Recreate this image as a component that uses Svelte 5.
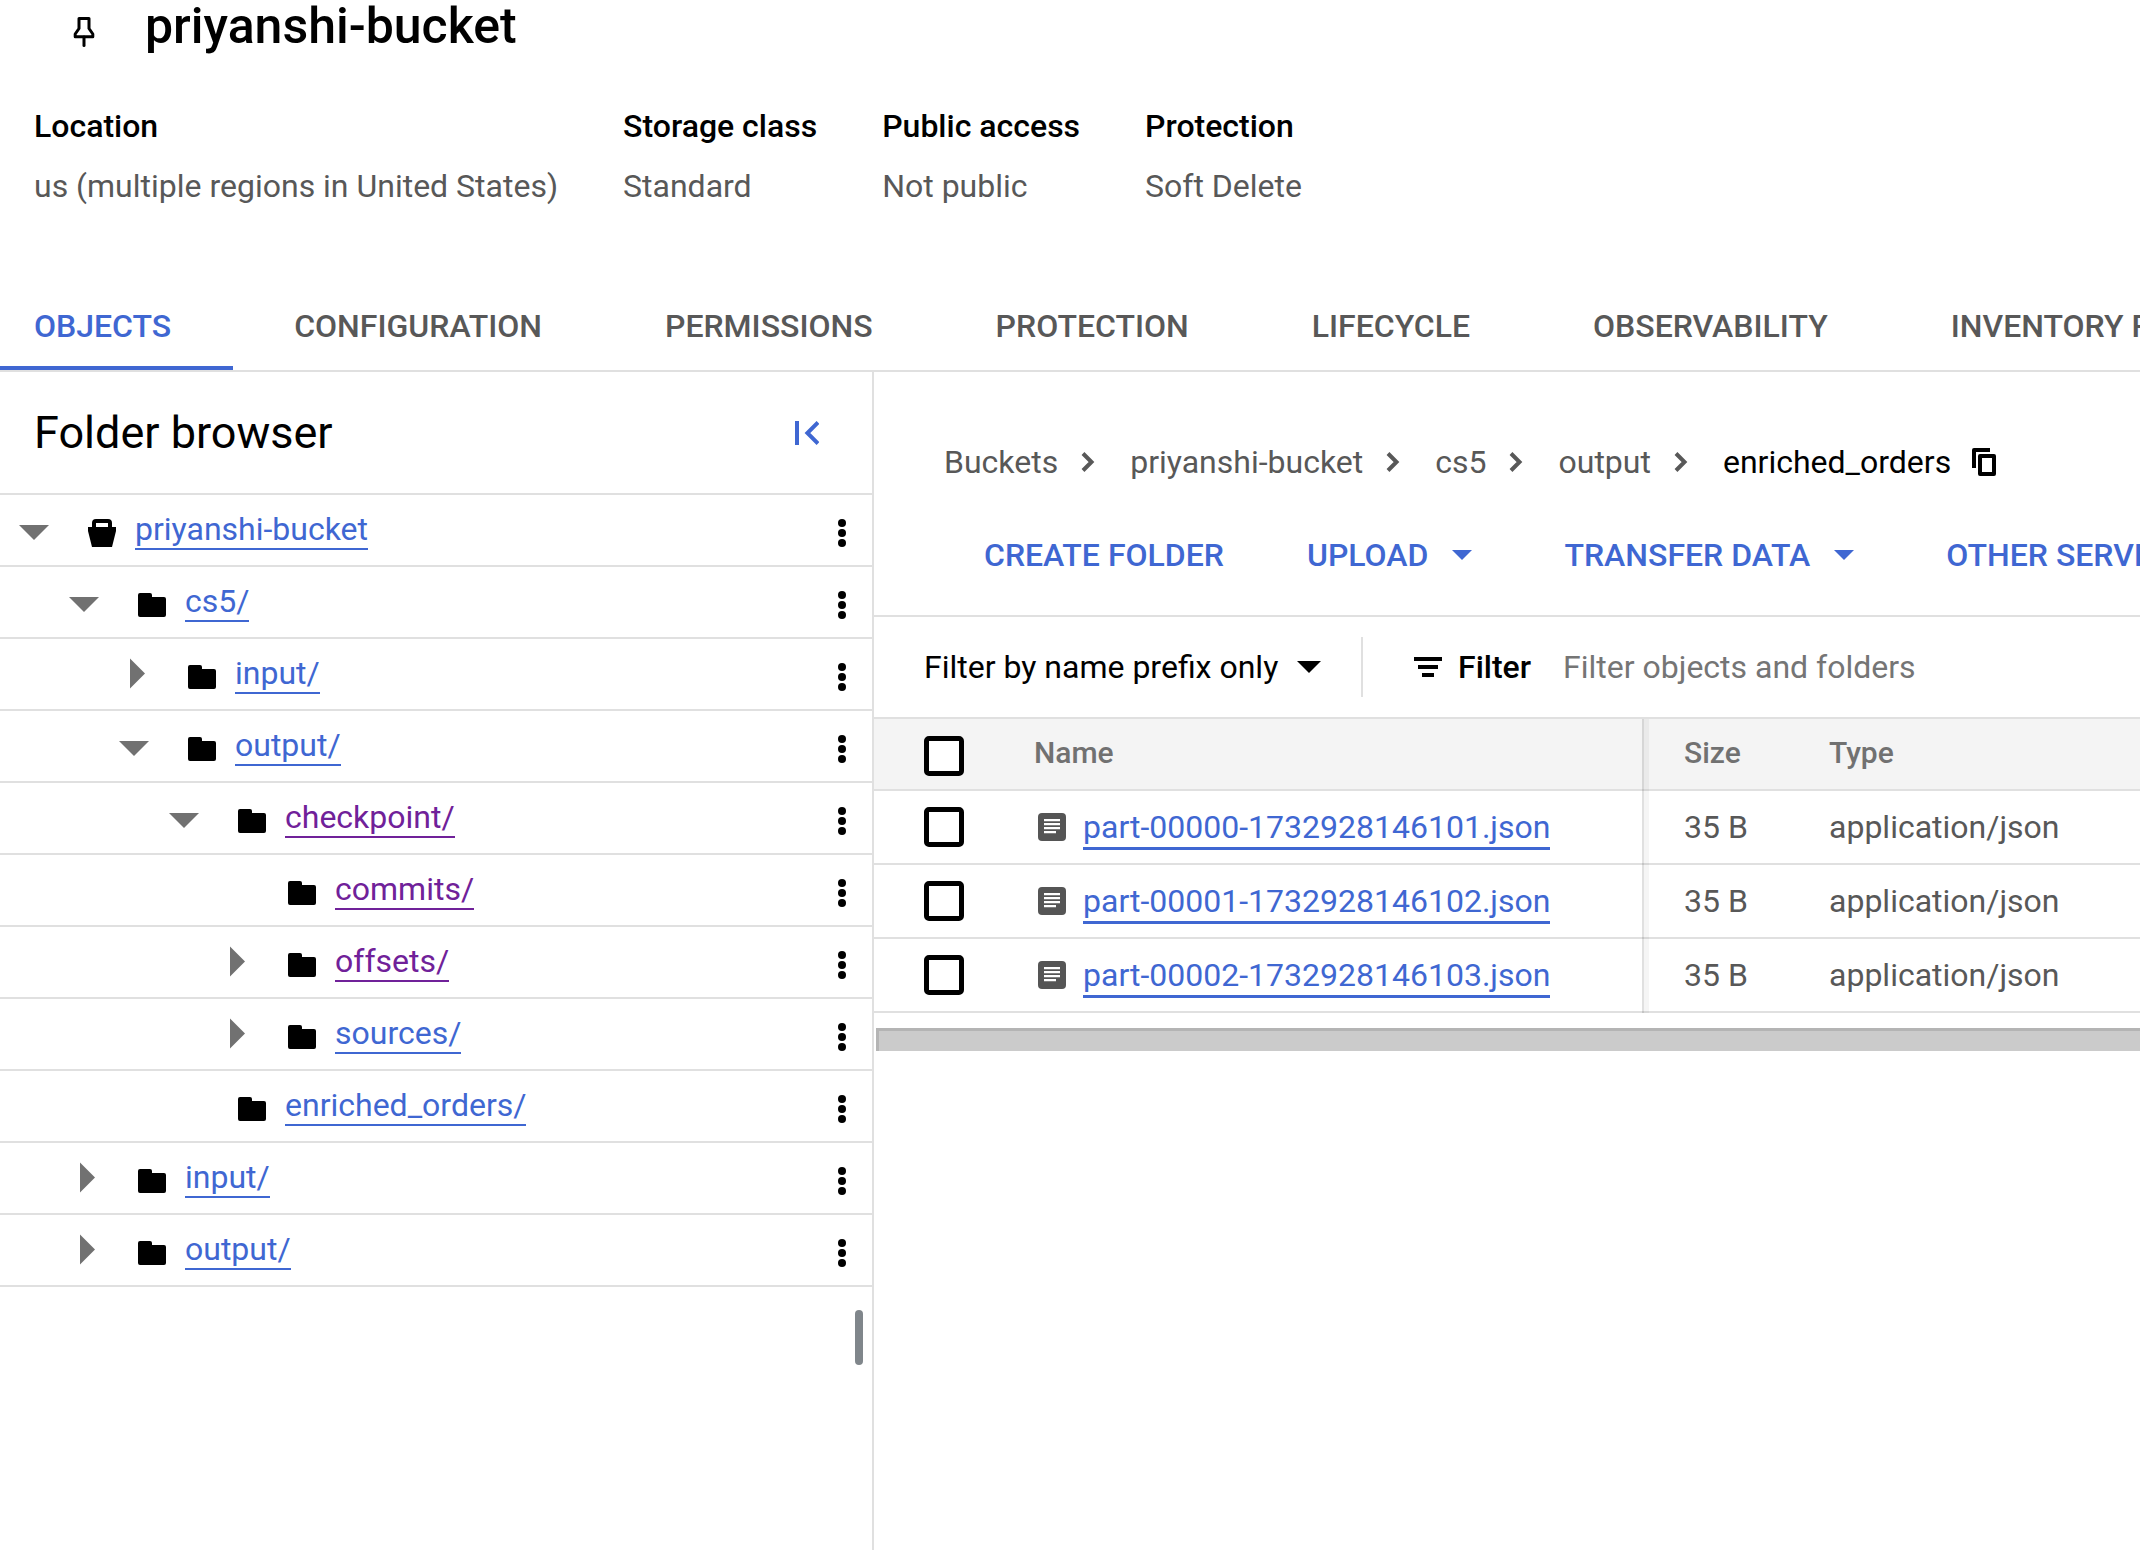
<script>
  const details = [
    { label: 'Location', value: 'us (multiple regions in United States)' },
    { label: 'Storage class', value: 'Standard' },
    { label: 'Public access', value: 'Not public' },
    { label: 'Protection', value: 'Soft Delete' }
  ];

  const tabs = [
    'OBJECTS',
    'CONFIGURATION',
    'PERMISSIONS',
    'PROTECTION',
    'LIFECYCLE',
    'OBSERVABILITY',
    'INVENTORY REPORTS'
  ];
  let activeTab = $state('OBJECTS');

  const tree = [
    { name: 'priyanshi-bucket', depth: 0, toggle: 'open', bucket: true },
    { name: 'cs5/', depth: 1, toggle: 'open' },
    { name: 'input/', depth: 2, toggle: 'closed' },
    { name: 'output/', depth: 2, toggle: 'open' },
    { name: 'checkpoint/', depth: 3, toggle: 'open', visited: true },
    { name: 'commits/', depth: 4, toggle: 'none', visited: true },
    { name: 'offsets/', depth: 4, toggle: 'closed', visited: true },
    { name: 'sources/', depth: 4, toggle: 'closed' },
    { name: 'enriched_orders/', depth: 3, toggle: 'none' },
    { name: 'input/', depth: 1, toggle: 'closed' },
    { name: 'output/', depth: 1, toggle: 'closed' }
  ];

  const crumbs = ['Buckets', 'priyanshi-bucket', 'cs5', 'output'];

  const actions = [
    { label: 'CREATE FOLDER', menu: false },
    { label: 'UPLOAD', menu: true },
    { label: 'TRANSFER DATA', menu: true },
    { label: 'OTHER SERVICES', menu: true }
  ];

  let files = $state([
    { name: 'part-00000-1732928146101.json', size: '35 B', type: 'application/json', checked: false },
    { name: 'part-00001-1732928146102.json', size: '35 B', type: 'application/json', checked: false },
    { name: 'part-00002-1732928146103.json', size: '35 B', type: 'application/json', checked: false }
  ]);

  function selectAll(event) {
    for (const file of files) file.checked = event.currentTarget.checked;
  }
</script>

<div class="page">
  <header class="title-bar">
    <button class="pin" aria-label="Pin bucket">
      <svg width="22" height="30" viewBox="0 0 22 30">
        <path d="M6 1.5H16V11.5L19.8 17V19.8H2.2V17L6 11.5Z" fill="none" stroke="#000" stroke-width="3" stroke-linejoin="round" />
        <path d="M11 20V28.5" stroke="#000" stroke-width="3" stroke-linecap="round" />
      </svg>
    </button>
    <h1>priyanshi-bucket</h1>
  </header>

  <dl class="details">
    {#each details as item}
      <div>
        <dt>{item.label}</dt>
        <dd>{item.value}</dd>
      </div>
    {/each}
  </dl>

  <div class="tabs" role="tablist">
    {#each tabs as tab}
      <button
        class="tab"
        class:active={tab === activeTab}
        role="tab"
        aria-selected={tab === activeTab}
        onclick={() => (activeTab = tab)}>{tab}</button>
    {/each}
  </div>

  <div class="body">
    <aside class="sidebar">
      <div class="side-head">
        <h2>Folder browser</h2>
        <button class="collapse" aria-label="Collapse folder browser">
          <svg width="24" height="24" viewBox="0 0 24 24">
            <path d="M0 0H4V24H0Z" fill="currentColor" />
            <path d="M23 1.4L12.4 12L23 22.6" fill="none" stroke="currentColor" stroke-width="4" />
          </svg>
        </button>
      </div>
      <ul class="tree">
        {#each tree as node}
          <li class="node">
            <span class="indent" style:width="{node.depth * 50}px"></span>
            {#if node.toggle === 'none'}
              <span class="toggle"></span>
            {:else}
              <button class="toggle" aria-label="Toggle {node.name}" aria-expanded={node.toggle === 'open'}>
                <svg width="60" height="70" viewBox="0 0 60 70">
                  {#if node.toggle === 'open'}
                    <path d="M19 30H49L34 45Z" fill="#717171" />
                  {:else}
                    <path d="M30 19.5V49.5L45 34.5Z" fill="#717171" />
                  {/if}
                </svg>
              </button>
            {/if}
            <svg class="kind" width="28" height="28" viewBox="0 0 28 28">
              {#if node.bucket}
                <path fill-rule="evenodd" d="M0 8H4V4Q4 0 8 0H20Q24 0 24 4V8H28V12L24 28H4L0 12ZM8 4V8H20V4Z" />
              {:else}
                <path d="M2 2H12Q14 2 14 4V6H26Q28 6 28 8V24Q28 26 26 26H2Q0 26 0 24V4Q0 2 2 2Z" />
              {/if}
            </svg>
            <a class="node-link" class:visited={node.visited} href="#{node.name}">{node.name}</a>
            <button class="more" aria-label="Actions for {node.name}">
              <svg width="8" height="28" viewBox="0 0 8 28">
                <circle cx="4" cy="4" r="4" />
                <circle cx="4" cy="14" r="4" />
                <circle cx="4" cy="24" r="4" />
              </svg>
            </button>
          </li>
        {/each}
      </ul>
      <div class="thumb"></div>
    </aside>

    <main class="content">
      <nav class="crumbs" aria-label="Breadcrumb">
        {#each crumbs as crumb}
          <a href="#{crumb}">{crumb}</a>
          <svg class="chevron" width="14" height="20" viewBox="0 0 14 20">
            <path d="M2 1.5L10.5 10L2 18.5" fill="none" stroke="#585858" stroke-width="4" />
          </svg>
        {/each}
        <span class="current">enriched_orders</span>
        <button class="copy" aria-label="Copy path">
          <svg width="24" height="28" viewBox="0 0 24 28">
            <path d="M2 20V2H18" fill="none" stroke="#000" stroke-width="4" stroke-linejoin="round" />
            <rect x="8" y="8" width="14" height="18" fill="none" stroke="#000" stroke-width="4" stroke-linejoin="round" />
          </svg>
        </button>
      </nav>

      <div class="actions">
        {#each actions as action}
          <button class="action" class:menu={action.menu}>
            {action.label}
            {#if action.menu}
              <svg width="20" height="10" viewBox="0 0 20 10"><path d="M0 0H20L10 10Z" fill="currentColor" /></svg>
            {/if}
          </button>
        {/each}
      </div>

      <div class="filter-bar">
        <label class="prefix">
          <select aria-label="Filter mode">
            <option>Filter by name prefix only</option>
          </select>
          <svg width="24" height="12" viewBox="0 0 24 12"><path d="M0 0H24L12 12Z" /></svg>
        </label>
        <label class="filter" for="object-filter">
          <svg width="28" height="20" viewBox="0 0 28 20">
            <path d="M0 0H28V4H0ZM4 8H24V12H4ZM8 16H20V20H8Z" />
          </svg>
          Filter
        </label>
        <input id="object-filter" class="filter-input" type="text" placeholder="Filter objects and folders" />
      </div>

      <table>
        <thead>
          <tr>
            <th class="c-check"><input type="checkbox" aria-label="Select all" onchange={selectAll} /></th>
            <th class="c-name">Name</th>
            <th class="c-size">Size</th>
            <th class="c-type">Type</th>
          </tr>
        </thead>
        <tbody>
          {#each files as file}
            <tr>
              <td class="c-check"><input type="checkbox" aria-label="Select {file.name}" bind:checked={file.checked} /></td>
              <td class="c-name">
                <div class="file">
                  <svg width="28" height="28" viewBox="0 0 28 28">
                    <rect width="28" height="28" rx="4" fill="#555" />
                    <path d="M6 6H22V8.2H6ZM6 10H22V12.2H6ZM6 14H22V16.2H6ZM6 18H18V20.2H6Z" fill="#fff" />
                  </svg>
                  <a href="#{file.name}">{file.name}</a>
                </div>
              </td>
              <td class="c-size">{file.size}</td>
              <td class="c-type">{file.type}</td>
            </tr>
          {/each}
        </tbody>
      </table>
      <div class="scroll-track"></div>
    </main>
  </div>
</div>

<style>
  :global(body) {
    margin: 0;
    background: #fff;
  }

  .page {
    --blue: #3f67d2;
    --line: #e0e0e0;
    --grey: #585858;
    display: flex;
    flex-direction: column;
    min-height: 100vh;
    overflow: hidden;
    color: #000;
    font: 400 32px/40px Roboto, sans-serif;
  }

  button,
  input,
  select {
    margin: 0;
    padding: 0;
    border: 0;
    background: none;
    color: inherit;
    font: inherit;
  }

  button {
    cursor: pointer;
  }

  svg {
    display: block;
    flex: none;
  }

  .title-bar {
    display: flex;
    align-items: flex-start;
    height: 60px;
    padding-left: 73px;
  }

  .pin {
    margin: 17px 50px 0 0;
  }

  h1 {
    margin: 0;
    font-size: 50px;
    line-height: 52px;
    font-weight: 500;
  }

  .details {
    display: flex;
    gap: 65px;
    margin: 0;
    padding: 46px 34px 78px;
    white-space: nowrap;
  }

  dt {
    font-weight: 500;
  }

  dd {
    margin: 20px 0 0;
    color: var(--grey);
  }

  .tabs {
    display: flex;
    border-bottom: 2px solid var(--line);
  }

  .tab {
    flex: none;
    padding: 22px 62px 20px 61px;
    border-bottom: 4px solid transparent;
    color: var(--grey);
    font-weight: 500;
    white-space: nowrap;
  }

  .tab:first-child {
    padding-left: 34px;
  }

  .tab.active {
    border-color: var(--blue);
    color: var(--blue);
  }

  .body {
    display: flex;
    flex: 1;
  }

  .sidebar {
    display: flex;
    flex: none;
    flex-direction: column;
    box-sizing: border-box;
    width: 874px;
    border-right: 2px solid var(--line);
  }

  .side-head {
    display: flex;
    align-items: center;
    justify-content: space-between;
    height: 121px;
    padding: 0 53px 0 34px;
    border-bottom: 2px solid var(--line);
  }

  h2 {
    margin: 0;
    font-size: 45px;
    line-height: 52px;
    font-weight: 400;
  }

  .collapse {
    color: var(--blue);
  }

  .tree {
    margin: 0;
    padding: 0;
    list-style: none;
  }

  .node {
    display: flex;
    align-items: center;
    height: 70px;
    border-bottom: 2px solid var(--line);
  }

  .toggle {
    width: 60px;
    height: 70px;
  }

  .kind {
    margin: 6px 19px 0 28px;
  }

  .node-link {
    border-bottom: 2px solid currentColor;
    color: var(--blue);
    line-height: 38px;
    text-decoration: none;
  }

  .node-link.visited {
    color: #702199;
  }

  .more {
    margin: 6px 26px 0 auto;
  }

  .thumb {
    width: 8px;
    height: 55px;
    margin: 23px 9px 0 auto;
    border-radius: 4px;
    background: #80868b;
  }

  .content {
    flex: 1;
    min-width: 0;
    overflow: hidden;
  }

  .crumbs {
    display: flex;
    align-items: center;
    padding: 70px 70px 0;
    white-space: nowrap;
  }

  .crumbs a {
    color: var(--grey);
    text-decoration: none;
  }

  .chevron {
    margin: 0 35px 0 23px;
  }

  .copy {
    margin-left: 21px;
  }

  .actions {
    display: flex;
    gap: 83px;
    padding: 53px 110px 40px;
    border-bottom: 2px solid var(--line);
  }

  .action {
    display: flex;
    flex: none;
    align-items: center;
    gap: 24px;
    color: var(--blue);
    font-weight: 500;
    white-space: nowrap;
  }

  .action.menu {
    padding-right: 9px;
  }

  .filter-bar {
    display: flex;
    align-items: center;
    height: 100px;
    padding-left: 50px;
    border-bottom: 2px solid var(--line);
  }

  .prefix {
    display: flex;
    align-items: center;
    gap: 18px;
    height: 60px;
    padding-right: 40px;
    border-right: 2px solid var(--line);
  }

  select {
    height: 40px;
    appearance: none;
  }

  .filter {
    display: flex;
    align-items: center;
    gap: 16px;
    padding: 0 32px 0 51px;
    font-weight: 500;
  }

  .filter-input {
    flex: 1;
    min-width: 0;
    outline: none;
  }

  .filter-input::placeholder {
    color: #757575;
    opacity: 1;
  }

  table {
    width: 100%;
    border-spacing: 0;
    table-layout: fixed;
  }

  th,
  td {
    box-sizing: border-box;
    height: 74px;
    padding: 0;
    border-bottom: 2px solid var(--line);
    color: var(--grey);
    font-weight: 400;
    text-align: left;
    white-space: nowrap;
  }

  th {
    height: 72px;
    padding-bottom: 2px;
    background: #f4f4f4;
    color: #717171;
    font-size: 30px;
    font-weight: 500;
  }

  .c-check {
    width: 160px;
    padding-left: 50px;
  }

  .c-name {
    width: 608px;
  }

  .c-size {
    position: relative;
    width: 187px;
    padding-left: 42px;
  }

  .c-size::before {
    position: absolute;
    top: 0;
    bottom: -2px;
    left: 0;
    width: 5px;
    border-left: 2px solid rgba(0, 0, 0, 0.12);
    background: rgba(0, 0, 0, 0.04);
    background-clip: padding-box;
    content: '';
  }

  input[type='checkbox'] {
    display: block;
    box-sizing: border-box;
    width: 40px;
    height: 40px;
    border: 5px solid #000;
    border-radius: 5px;
    background: #fff;
    appearance: none;
  }

  input[type='checkbox']:checked {
    background: var(--blue);
  }

  th input[type='checkbox'] {
    margin-top: 6px;
  }

  .file {
    display: flex;
    align-items: center;
    gap: 17px;
    padding-left: 4px;
  }

  .file a {
    margin-top: 3px;
    border-bottom: 3px solid currentColor;
    color: var(--blue);
    text-decoration: none;
  }

  .scroll-track {
    height: 20px;
    margin: 15px 0 0 2px;
    border-top: 3px solid #b4b4b4;
    border-left: 3px solid #b4b4b4;
    background: #cbcbcb;
  }
</style>
